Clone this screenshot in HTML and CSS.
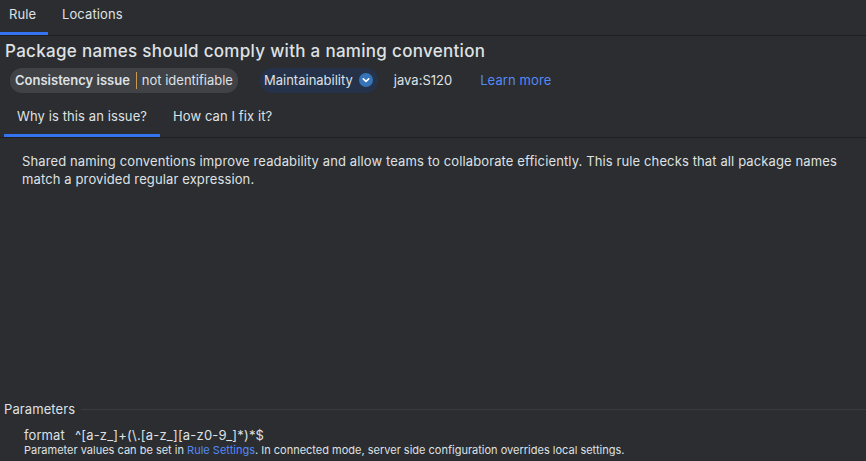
FILE: index.html
```html
<!DOCTYPE html>
<html>
<head>
<meta charset="utf-8">
<link rel="stylesheet" href="styles.css">
</head>
<body>
<div class="app">
  <div class="tabs">
    <div class="tab active">Rule</div>
    <div class="tab">Locations</div>
  </div>
  <h1 class="title">Package names should comply with a naming convention</h1>
  <div class="meta">
    <div class="pill attr"><span class="strong">Consistency issue</span><span class="sep"></span><span>not identifiable</span></div>
    <div class="pill impact"><span>Maintainability</span>
      <svg class="chev" width="14" height="14" viewBox="0 0 14 14"><circle cx="7" cy="7" r="7" fill="#3574b8"/><path d="M4.3 5.8 L7 8.4 L9.7 5.8" fill="none" stroke="#ffffff" stroke-width="1.6" stroke-linecap="round" stroke-linejoin="round"/></svg>
    </div>
    <span class="key">java:S120</span>
    <a class="link">Learn more</a>
  </div>
  <div class="subtabs">
    <div class="subtab active">Why is this an issue?</div>
    <div class="subtab">How can I fix it?</div>
  </div>
  <div class="desc">
    <p>Shared naming conventions improve readability and allow teams to collaborate efficiently. This rule checks that all package names match a provided regular expression.</p>
  </div>
  <div class="params">
    <div class="params-head"><span>Parameters</span><span class="line"></span></div>
    <div class="param"><span class="pname">format</span><span class="pval">^[a-z_]+(\.[a-z_][a-z0-9_]*)*$</span></div>
    <div class="note">Parameter values can be set in <a class="link">Rule Settings</a>. In connected mode, server side configuration overrides local settings.</div>
  </div>
</div>
</body>
</html>
```
FILE: styles.css
```css
html, body {
  margin: 0;
  padding: 0;
  background: #2b2d30;
  height: 100%;
}
body {
  font-family: Inter, "Noto Sans", sans-serif;
  color: #dfe1e5;
  font-size: 13px;
  letter-spacing: 0.1px;
}
.app {
  display: flex;
  flex-direction: column;
  height: 461px;
  overflow: hidden;
}
.tabs {
  display: flex;
  height: 35px;
  border-bottom: 1px solid #1e1f22;
}
.tab {
  padding: 0 10px 0 9px;
  line-height: 29px;
  font-size: 13px;
  height: 35px;
  box-sizing: border-box;
  white-space: nowrap;
}
.tab + .tab { padding-left: 14px; }
.tab.active {
  border-bottom: 3px solid #3574f0;
  width: 48px;
  padding-right: 0;
}
.title {
  margin: 5px 0 0 5px;
  font-size: 17px;
  font-weight: 500;
  letter-spacing: 0.3px;
  line-height: 20px;
}
.meta {
  display: flex;
  align-items: center;
  margin: 6px 0 0 10px;
  height: 26px;
  white-space: nowrap;
}
.pill {
  display: flex;
  align-items: center;
  height: 25px;
  border-radius: 12px;
  padding: 0 5px;
  font-size: 13px;
}
.attr {
  background: #404245;
  width: 228px;
  box-sizing: border-box;
  letter-spacing: 0;
}
.attr .strong { font-weight: 600; }
.sep {
  display: inline-block;
  width: 1px;
  height: 17px;
  background: #c69a53;
  margin: 0 5px 0 6px;
}
.impact {
  background: #25324a;
  margin-left: 22px;
  padding: 0 5px 0 4px;
  letter-spacing: 0;
}
.chev { margin-left: 6px; }
.key { margin-left: 16px; letter-spacing: 0; }
.link { color: #548af7; }
.meta .link { margin-left: 28px; }
.subtabs {
  display: flex;
  height: 37px;
  margin-top: 7px;
  border-bottom: 1px solid #1e1f22;
}
.subtab {
  padding: 0 13px;
  line-height: 33px;
  box-sizing: border-box;
  height: 37px;
  white-space: nowrap;
}
.subtab.active {
  margin-left: 4px;
  width: 156px;
  border-bottom: 3px solid #3574f0;
}
.desc {
  flex: 1;
  padding: 14px 22px 0 22px;
}
.desc p {
  margin: 0;
  line-height: 18px;
  font-size: 13px;
  letter-spacing: 0.12px;
}
.params { padding: 0 0 4px 0; }
.params-head {
  display: flex;
  align-items: center;
  padding-left: 4px;
  height: 18px;
}
.params-head .line {
  flex: 1;
  height: 1px;
  background: #393b40;
  margin-left: 6px;
}
.param {
  margin: 9px 0 0 24px;
  line-height: 16px;
  white-space: nowrap;
}
.pval { margin-left: 10px; letter-spacing: 0.2px; }
.note {
  margin-left: 24px;
  font-size: 11px;
  line-height: 14px;
  letter-spacing: 0;
}
```
